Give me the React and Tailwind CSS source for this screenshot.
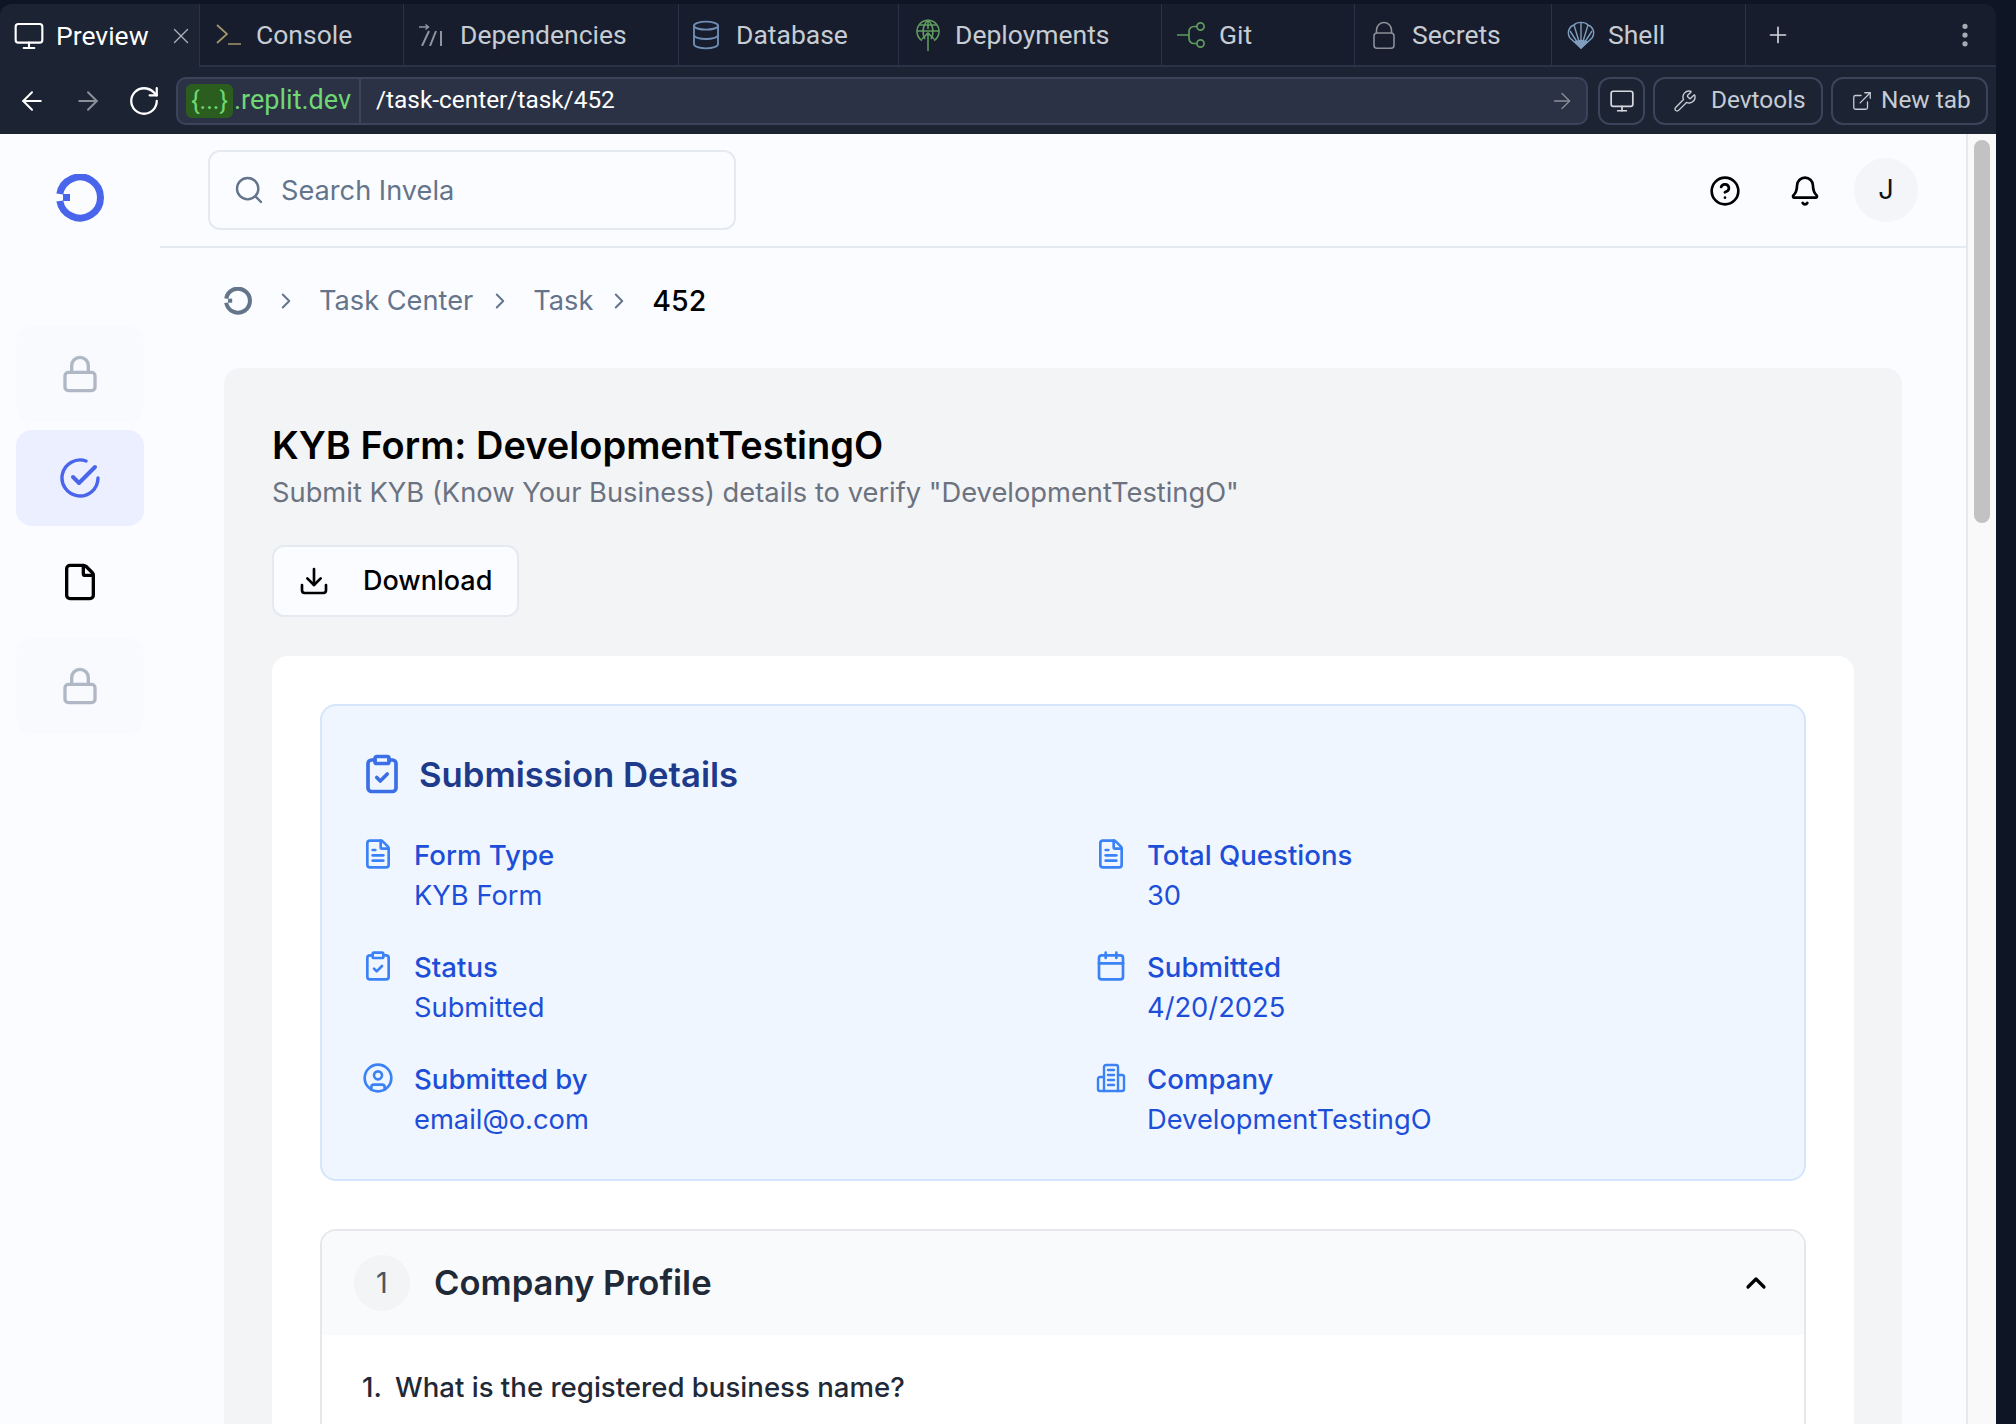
import React from "react";
import { Monitor, X, Plus, EllipsisVertical, ArrowLeft, ArrowRight, RotateCw, Wrench, ExternalLink, Search, CircleHelp, Bell, ChevronRight, ChevronUp, Lock, File, Download, ClipboardCheck, FileText, Calendar, CircleUser, Database } from "lucide-react";

const Logo = ({ className, color }) => (
  <svg viewBox="0 0 48 48" className={className} fill="none">
    <path d="M3.8 20A20.5 20.5 0 1 1 3.8 27" stroke={color} strokeWidth="7" />
    <rect x="7" y="20" width="7" height="7" fill={color} />
  </svg>
);

const ConsoleIcon = () => (
  <svg viewBox="0 0 25 21" className="w-[25px] h-[21px]" fill="none" stroke="#a39669" strokeWidth="1.7">
    <path d="M1 1l10 9L1 19" /><path d="M12 20h13" />
  </svg>
);
const DepsIcon = () => (
  <svg viewBox="0 0 24 22" className="w-[24px] h-[22px]" fill="none" stroke="#8f959e" strokeWidth="2">
    <path d="M0 3h9M6.5 0.5L9.5 3 6.5 5.5" strokeWidth="1.4" /><path d="M3 22l7-15M11 22l6-15M22 7v15" />
  </svg>
);
const GlobeUp = () => (
  <svg viewBox="0 0 24 32" className="w-[24px] h-[32px]" fill="none" stroke="#5f9a5f" strokeWidth="1.6">
    <path d="M6 21.5A11 11 0 1 1 18 21.5" />
    <path d="M1 12h22M3.5 6h17M12 1c-6 6-6 14-3 19M12 1c6 6 6 14 3 19M12 1v9" />
    <path d="M12 32V14M6 20l6-6 6 6" />
  </svg>
);
const GitIcon = () => (
  <svg viewBox="0 0 28 26" className="w-[28px] h-[26px]" fill="none" stroke="#5f9a5f" strokeWidth="1.7">
    <circle cx="23.5" cy="4.5" r="3.6" /><circle cx="23.5" cy="21.5" r="3.6" />
    <path d="M0 13h12M20 4.5h-3a5 5 0 0 0-5 5v7a5 5 0 0 0 5 5h3" />
  </svg>
);
const SecretIcon = () => (
  <svg viewBox="0 0 22 28" className="w-[22px] h-[28px]" fill="none" stroke="#8a8f98" strokeWidth="1.6">
    <rect x="1" y="12" width="20" height="15.2" rx="3" />
    <path d="M3.5 12V9a7.5 7.5 0 0 1 15 0v3" />
  </svg>
);
const ShellIcon = () => (
  <svg viewBox="0 0 28 28" className="w-[28px] h-[28px]" fill="none" stroke="#7f9dbd" strokeWidth="1.4">
    <path d="M14 27L3 17C-1 11 3 5 7 4c3-3.500 11-3.500 14 0 4 1 8 7 4 13z" />
    <path d="M14 27L7 4M14 27L21 4M14 27V1M14 27L3 10M14 27l11-17" />
    <path d="M14 27l-6-6q6-3 12 0z" fill="#7f9dbd" />
  </svg>
);
const BuildingIcon = () => (
  <svg viewBox="0 0 32 32" className="w-[32px] h-[32px]" fill="none" stroke="#3b82f6" strokeWidth="2.4" strokeLinecap="round" strokeLinejoin="round">
    <path d="M9 29V5a2 2 0 0 1 2-2h10a2 2 0 0 1 2 2v24z" />
    <path d="M9 15H5a2 2 0 0 0-2 2v10a2 2 0 0 0 2 2h4M23 13h4a2 2 0 0 1 2 2v12a2 2 0 0 1-2 2h-4" />
    <path d="M13 8h6M13 13h6M13 18h6M13 23h6" />
  </svg>
);

const tabs = [
  { w: "w-[204px]", label: "Console", icon: <ConsoleIcon />, gap: "gap-[15px]", pl: "pl-[16px]" },
  { w: "w-[275px]", label: "Dependencies", icon: <DepsIcon />, gap: "gap-[17px]", pl: "pl-[15px]" },
  { w: "w-[220px]", label: "Database", icon: <Database size={32} strokeWidth={1.4} color="#6f8db3" />, gap: "gap-[14px]", pl: "pl-[11px]" },
  { w: "w-[263px]", label: "Deployments", icon: <GlobeUp />, gap: "gap-[15px]", pl: "pl-[17px]" },
  { w: "w-[193px]", label: "Git", icon: <GitIcon />, gap: "gap-[14px]", pl: "pl-[15px]" },
  { w: "w-[197px]", label: "Secrets", icon: <SecretIcon />, gap: "gap-[17px]", pl: "pl-[18px]" },
  { w: "w-[194px]", label: "Shell", icon: <ShellIcon />, gap: "gap-[13px]", pl: "pl-[15px]" },
];

const Info = ({ icon, label, value }) => (
  <div className="flex h-[80px]">
    <div className="w-[52px] shrink-0 pt-[3px]">{icon}</div>
    <div className="flex flex-col">
      <div className="h-[41px] leading-[40px] text-[27.6px] font-medium text-[#1d4ed8]">{label}</div>
      <div className="h-[39px] leading-[40px] text-[27.3px] text-[#1d4ed8]">{value}</div>
    </div>
  </div>
);

const ic = { size: 32, color: "#3b82f6", strokeWidth: 2 };

const NavItem = ({ active, children, locked }) => (
  <div className={`w-[128px] h-[96px] rounded-[16px] flex items-center justify-center ${active ? "bg-[#ebefff]" : locked ? "bg-[#f9fafe]" : ""}`}>
    {children}
  </div>
);

export default function App() {
  return (
    <div className="w-[2016px] h-[1424px] overflow-hidden flex bg-[#0e1525] font-['Inter',sans-serif]">
      <div className="w-[1996px] h-full flex flex-col pt-[4px]">
        {/* tabs */}
        <div className="h-[63px] shrink-0 flex bg-[#171d2d] rounded-t-[12px] overflow-hidden font-['Roboto',sans-serif] text-[26.5px] text-[#c6ccd3]">
          <div className="w-[200px] h-full flex items-center pl-[13px] bg-[#1c2333] text-white border-r border-[#2b3245]">
            <Monitor size={32} strokeWidth={1.6} className="shrink-0" />
            <span className="ml-[11px]">Preview</span>
            <X size={26} strokeWidth={1.2} className="ml-[19px] shrink-0 text-[#aeb4bc]" />
          </div>
          {tabs.map((t) => (
            <div key={t.label} className={`${t.w} h-full flex items-center ${t.pl} ${t.gap} border-r border-b-2 border-[#2b3245]`}>
              {t.icon}
              <span>{t.label}</span>
            </div>
          ))}
          <div className="flex-1 flex items-center pl-[19px] pr-[16px] justify-between border-b-2 border-[#2b3245]">
            <Plus size={26} strokeWidth={1.5} className="text-[#d5d9de]" />
            <EllipsisVertical size={30} strokeWidth={2.2} className="text-[#a5abb3]" />
          </div>
        </div>
        {/* toolbar */}
        <div className="h-[67px] shrink-0 flex items-center bg-[#1c2333] pl-[17px] pr-[8px] font-['Roboto',sans-serif] text-[24.4px] text-[#c6ccd3]">
          <ArrowLeft size={30} strokeWidth={1.6} className="text-white shrink-0" />
          <ArrowRight size={30} strokeWidth={1.6} className="ml-[26px] text-[#8b9098] shrink-0" />
          <RotateCw size={34} strokeWidth={1.6} className="ml-[24px] text-white shrink-0" />
          <div className="ml-[15px] w-[1412px] h-[48px] shrink-0 flex items-center bg-[#2b3245] border-2 border-[#3c445c] rounded-[10px] text-white">
            <div className="w-[183px] h-full flex items-center border-r-2 border-[#3c445c] pl-[8px] text-[27px] text-[#6fd873]">
              <span className="w-[47px] h-[34px] leading-[34px] text-center rounded-[6px] bg-[#2b5e1e] text-[25px]">{"{...}"}</span>
              <span className="ml-[1px]">.replit.dev</span>
            </div>
            <span className="ml-[15px] flex-1">/task-center/task/452</span>
            <ArrowRight size={26} strokeWidth={1.2} className="mr-[11px] text-[#8b9098]" />
          </div>
          <div className="ml-[10px] w-[47px] h-[48px] flex items-center justify-center border-2 border-[#3c445c] rounded-[12px] shrink-0">
            <Monitor size={26} strokeWidth={1.6} className="text-[#d5d9de]" />
          </div>
          <div className="ml-[8px] w-[170px] h-[48px] flex items-center pl-[18px] gap-[14px] border-2 border-[#3c445c] rounded-[12px] shrink-0">
            <Wrench size={24} strokeWidth={1.4} />
            <span>Devtools</span>
          </div>
          <div className="ml-[8px] w-[157px] h-[48px] flex items-center pl-[18px] gap-[8px] border-2 border-[#3c445c] rounded-[12px] shrink-0">
            <ExternalLink size={22} strokeWidth={1.4} />
            <span>New tab</span>
          </div>
        </div>
        {/* page */}
        <div className="flex-1 min-h-0 flex bg-[#fbfcff]">
          <div className="w-[160px] shrink-0 flex flex-col items-center pt-[40px]">
            <Logo className="w-[48px] h-[48px]" color="#4965ec" />
            <div className="mt-[104px] flex flex-col gap-[8px]">
              <NavItem locked><Lock size={40} strokeWidth={2} color="#b0b8c6" /></NavItem>
              <NavItem active><svg viewBox="0 0 40 40" className="w-[40px] h-[40px]" fill="none" stroke="#4965ec" strokeWidth="3.4" strokeLinecap="round" strokeLinejoin="round"><path d="M38 20a18 18 0 1 1-12-17" /><path d="M13 19l6 6 16-16" strokeWidth="4" /></svg></NavItem>
              <NavItem><File size={40} strokeWidth={2} color="#000" /></NavItem>
              <NavItem locked><Lock size={40} strokeWidth={2} color="#b0b8c6" /></NavItem>
            </div>
          </div>
          <div className="flex-1 min-w-0 flex flex-col">
            <div className="h-[114px] shrink-0 border-b-2 border-[#e5e9f0] flex items-center pl-[48px] pr-[48px]">
              <div className="w-[528px] h-[80px] mt-[0px] rounded-[12px] border-2 border-[#e5e9f0] flex items-center pl-[23px] gap-[16px] text-[27.2px] text-[#64748b]">
                <Search size={32} strokeWidth={1.8} />
                <span className="mt-[2px]">Search Invela</span>
              </div>
              <div className="ml-auto flex items-center mt-[0px]">
                <CircleHelp size={32} strokeWidth={2} color="#000" className="mt-[1px]" />
                <Bell size={32} strokeWidth={2} color="#000" className="ml-[48px] mt-[1px]" />
                <div className="ml-[33px] w-[64px] h-[64px] rounded-full bg-[#f3f5f9] flex items-center justify-center text-[27.2px] text-[#111]">J</div>
              </div>
            </div>
            <div className="flex-1 min-h-0 pl-[64px] pr-[64px] overflow-hidden">
              <div className="h-[120px] flex items-center text-[27.2px] text-[#64748b] pb-[14px]">
                <Logo className="w-[28px] h-[28px]" color="#64748b" />
                <ChevronRight size={26} strokeWidth={1.8} className="ml-[21px]" />
                <span className="ml-[20px]">Task Center</span>
                <ChevronRight size={26} strokeWidth={1.8} className="ml-[14px]" />
                <span className="ml-[20px]">Task</span>
                <ChevronRight size={26} strokeWidth={1.8} className="ml-[13px]" />
                <span className="ml-[20px] text-[28.5px] font-medium text-black">452</span>
              </div>
              <div className="rounded-t-[16px] bg-[#f3f4f6] pt-[48px] px-[48px] h-[1100px]">
                <h1 className="text-[38px] leading-[58px] font-semibold text-black">KYB Form: DevelopmentTestingO</h1>
                <p className="text-[27.3px] leading-[40px] text-[#6b7280] mt-[-1px]">Submit KYB (Know Your Business) details to verify "DevelopmentTestingO"</p>
                <div className="mt-[32px] w-[247px] h-[72px] rounded-[12px] border-2 border-[#e5e9f0] bg-[#fbfcff] flex items-center pl-[24px] gap-[33px] text-[27px] font-medium text-black">
                  <Download size={32} strokeWidth={2} />
                  <span>Download</span>
                </div>
                <div className="mt-[39px] rounded-t-[16px] bg-white p-[48px] h-[900px]">
                  <div className="h-[477px] rounded-[16px] border-2 border-[#d5e5fb] bg-[#eff6ff] px-[40px] pt-[48px]">
                    <div className="flex items-center gap-[17px] h-[40px]">
                      <ClipboardCheck size={42} strokeWidth={2.1} color="#3b6fe6" className="-ml-[1px] -mr-[1px]" />
                      <h2 className="text-[34.7px] font-semibold text-[#1e3a8a]">Submission Details</h2>
                    </div>
                    <div className="mt-[41px] grid grid-cols-2 gap-x-[64px] gap-y-[32px]">
                      <Info icon={<FileText {...ic} />} label="Form Type" value="KYB Form" />
                      <Info icon={<FileText {...ic} />} label="Total Questions" value="30" />
                      <Info icon={<ClipboardCheck {...ic} />} label="Status" value="Submitted" />
                      <Info icon={<Calendar {...ic} />} label="Submitted" value="4/20/2025" />
                      <Info icon={<CircleUser {...ic} />} label="Submitted by" value="email@o.com" />
                      <Info icon={<BuildingIcon />} label="Company" value="DevelopmentTestingO" />
                    </div>
                  </div>
                  <div className="mt-[48px] rounded-[16px] border-2 border-[#e5e7eb] overflow-hidden h-[400px]">
                    <div className="h-[104px] bg-[#f9fafb] flex items-center pl-[32px] pr-[32px]">
                      <div className="w-[56px] h-[56px] rounded-full bg-[#f3f4f6] flex items-center justify-center text-[29px] text-[#4b5563]">1</div>
                      <span className="ml-[24px] text-[34.6px] font-semibold text-[#1f2937]">Company Profile</span>
                      <ChevronUp size={32} strokeWidth={2.4} color="#000" className="ml-auto" />
                    </div>
                    <div className="pt-[32px] pl-[40px] flex text-[27.6px] font-medium text-[#1f2937]">
                      <span className="w-[33px]">1.</span>
                      <span>What is the registered business name?</span>
                    </div>
                  </div>
                </div>
              </div>
            </div>
          </div>
          <div className="w-[30px] shrink-0 bg-[#f9f9f9] border-l-2 border-[#e8e8e8] pl-[6px] pt-[6px]">
            <div className="w-[16px] h-[383px] rounded-full bg-[#c2c2c2]" />
          </div>
        </div>
      </div>
    </div>
  );
}
